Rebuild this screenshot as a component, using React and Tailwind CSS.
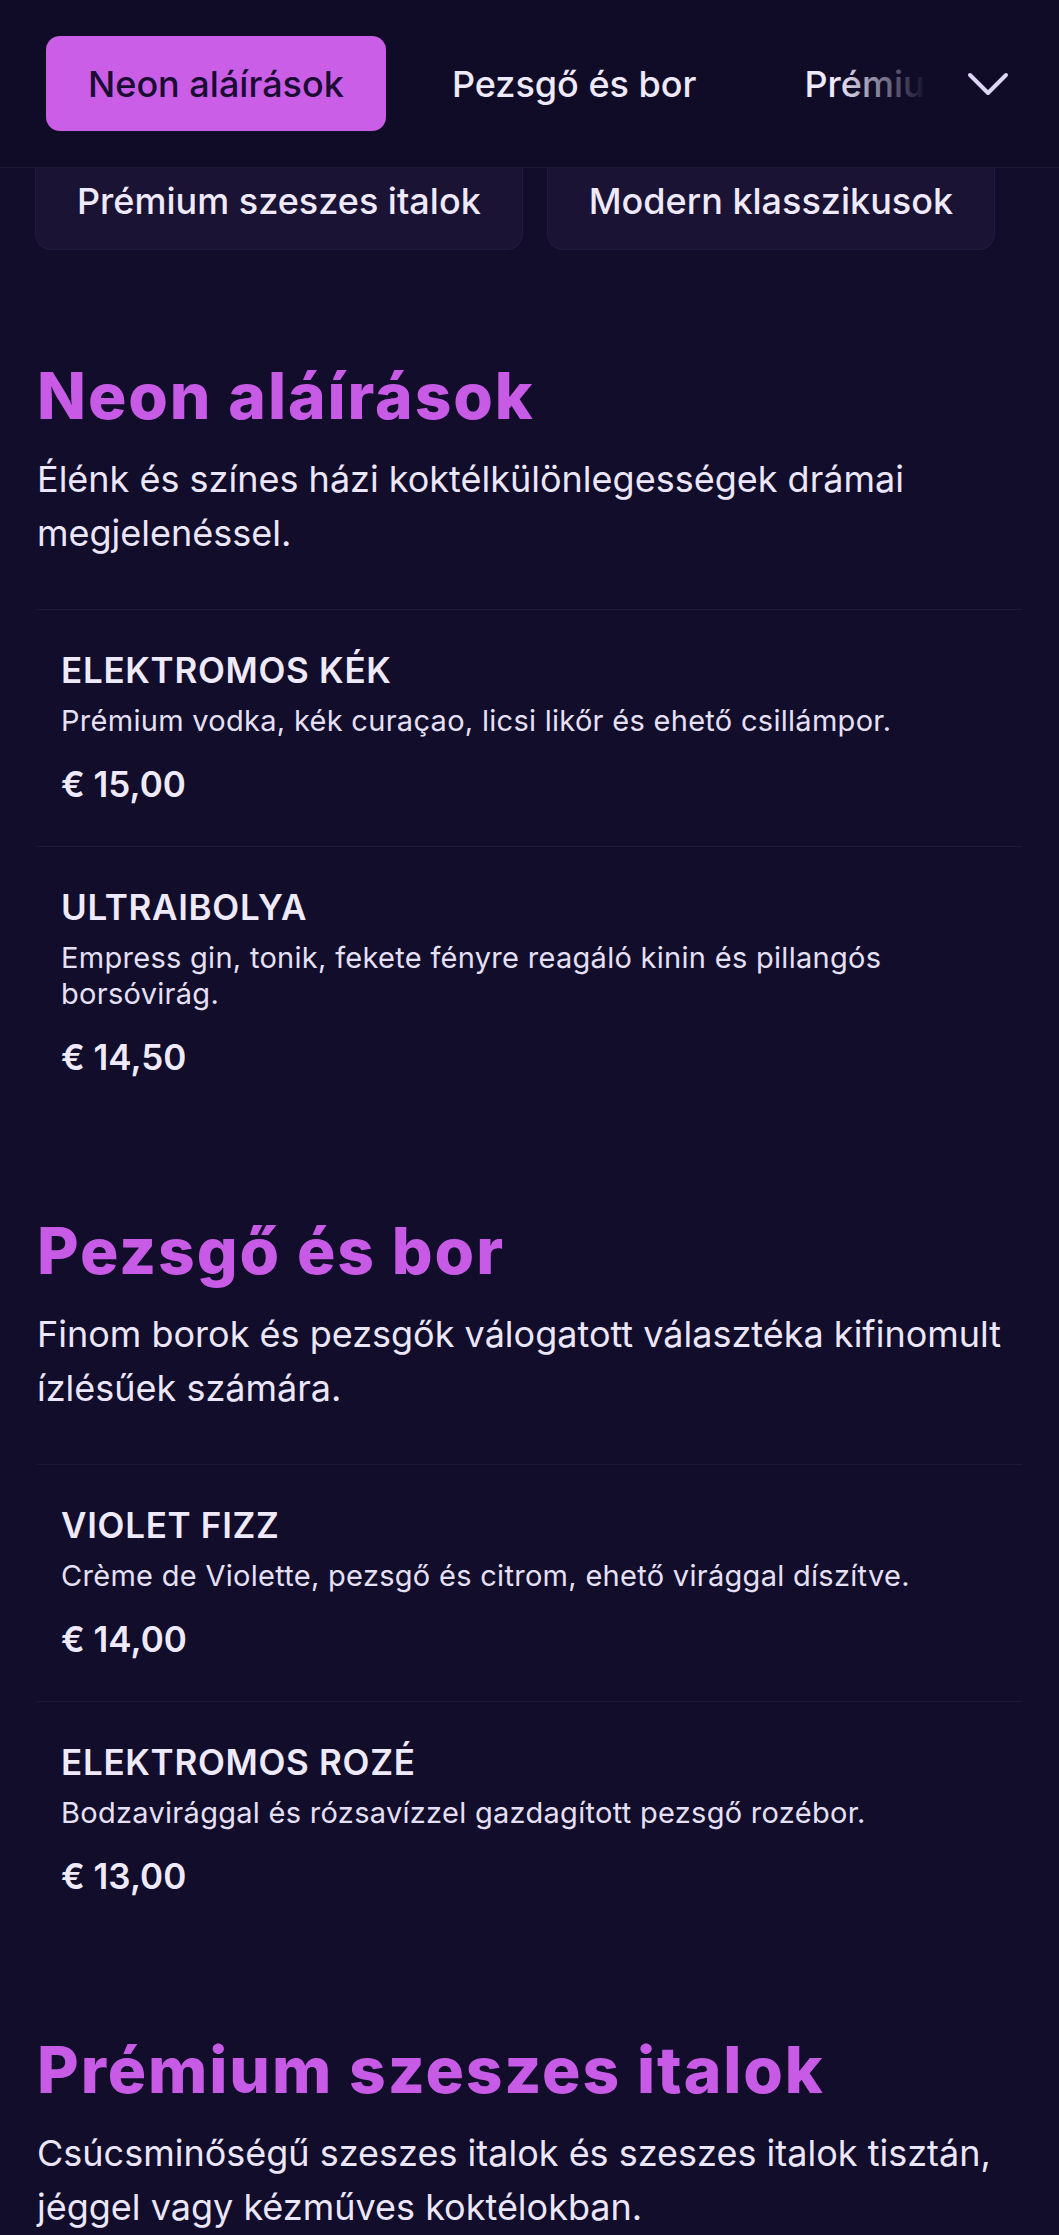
import { useState } from 'react';

const TABS = ['Neon aláírások', 'Pezsgő és bor', 'Prémium szeszes italok', 'Modern klasszikusok'];

const SECTIONS = [
  {
    title: 'Neon aláírások',
    desc: 'Élénk és színes házi koktélkülönlegességek drámai megjelenéssel.',
    items: [
      { name: 'Elektromos kék', desc: 'Prémium vodka, kék curaçao, licsi likőr és ehető csillámpor.', price: '€ 15,00' },
      { name: 'Ultraibolya', desc: 'Empress gin, tonik, fekete fényre reagáló kinin és pillangós borsóvirág.', price: '€ 14,50' },
    ],
  },
  {
    title: 'Pezsgő és bor',
    desc: 'Finom borok és pezsgők válogatott választéka kifinomult ízlésűek számára.',
    items: [
      { name: 'Violet Fizz', desc: 'Crème de Violette, pezsgő és citrom, ehető virággal díszítve.', price: '€ 14,00' },
      { name: 'Elektromos rozé', desc: 'Bodzavirággal és rózsavízzel gazdagított pezsgő rozébor.', price: '€ 13,00' },
    ],
  },
  {
    title: 'Prémium szeszes italok',
    desc: 'Csúcsminőségű szeszes italok és szeszes italok tisztán, jéggel vagy kézműves koktélokban.',
    items: [],
  },
];

function Chevron() {
  return (
    <svg viewBox="0 0 42 26" className="ml-[30px] h-[26px] w-[42px] shrink-0" fill="none" stroke="#ddd5f5" strokeWidth="4" strokeLinecap="round" strokeLinejoin="round">
      <polyline points="3,4 21,22 39,4" />
    </svg>
  );
}

export default function App() {
  const [active, setActive] = useState(0);

  return (
    <div className="min-h-screen bg-[#110d2a] font-['Inter',sans-serif] text-[#ece6fb]">
      <header className="flex h-[168px] items-center border-b border-[#1b1634] bg-[#100c27] pl-[46px] pr-[50px]">
        <div className="relative flex-1 overflow-hidden">
          <div className="flex gap-[24px] whitespace-nowrap">
            {TABS.map((t, i) => (
              <button
                key={t}
                onClick={() => setActive(i)}
                className={i === active
                  ? 'h-[95px] shrink-0 rounded-[14px] bg-[#ca5ee7] px-[42px] text-[36px] font-medium text-[#1a0c33]'
                  : 'h-[95px] shrink-0 px-[42px] text-[36px] font-medium text-[#efe9fc]'}
              >
                {t}
              </button>
            ))}
          </div>
          <div className="pointer-events-none absolute inset-y-0 right-0 w-[100px] bg-linear-to-l from-[#100c27] from-10% to-transparent" />
        </div>
        <Chevron />
      </header>

      <div className="flex gap-[24px] px-[35px]">
        {TABS.slice(2).map((t) => (
          <div key={t} className="flex h-[82px] items-end rounded-b-[16px] border-x border-b border-[#221a3d] bg-[#1a1333] px-[41px] pb-[24px] text-[36px] font-medium leading-[48px] text-[#efe9fc]">
            {t}
          </div>
        ))}
      </div>

      <main className="px-[37px] pt-[14px] pb-[20px]">
        {SECTIONS.map((s) => (
          <section key={s.title} className="pt-[96px]">
            <h2 className="text-[64px] font-extrabold leading-[72px] tracking-[0.03em] text-[#c75be6]">{s.title}</h2>
            <p className="mt-[20px] text-[36px] leading-[54px] text-[#ece6fb]">{s.desc}</p>
            <div className="mt-[49px]">
              {s.items.map((it) => (
                <div key={it.name} className="border-t border-[#1d1838] px-[24px] pt-[40px] pb-[42px]">
                  <h3 className="text-[35px] font-semibold uppercase leading-[40px] tracking-[0.02em] text-[#efe9fc]">{it.name}</h3>
                  <p className="mt-[13px] text-[29px] leading-[36px] tracking-[0.01em] text-[#e6e0f7]">{it.desc}</p>
                  <div className="mt-[25px] text-[35px] font-semibold leading-[40px] text-[#efe9fc]">{it.price}</div>
                </div>
              ))}
            </div>
          </section>
        ))}
      </main>
    </div>
  );
}
